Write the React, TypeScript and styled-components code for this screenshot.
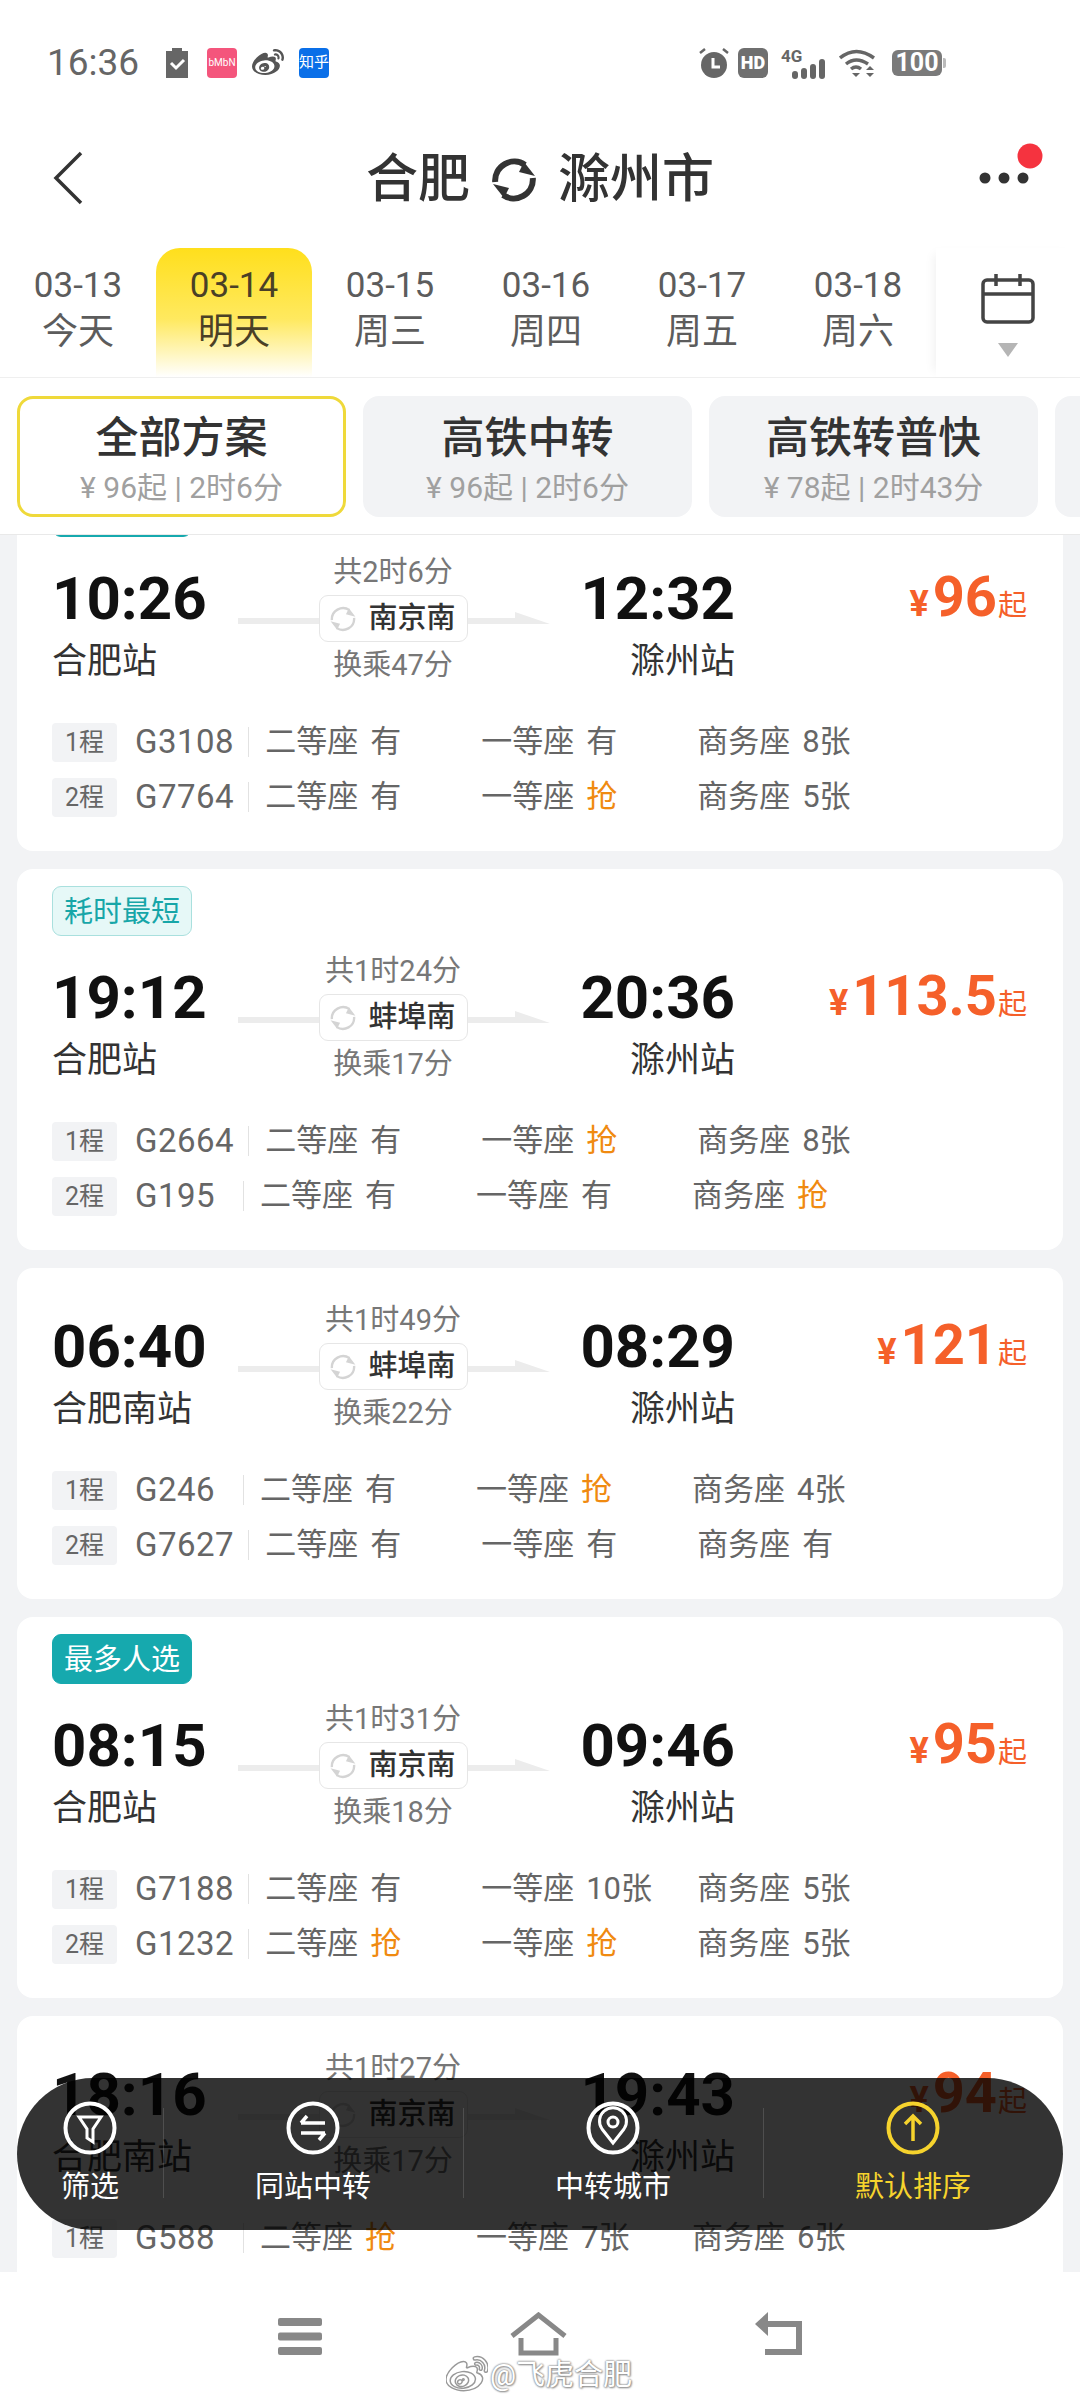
import type { ReactNode } from "react";
import styled, { createGlobalStyle } from "styled-components";
import { FaWeibo } from "react-icons/fa";

const GlobalStyle = createGlobalStyle`
  html, body {
    margin: 0;
    padding: 0;
    background: #fff;
  }
  * {
    box-sizing: border-box;
  }
`;

const Page = styled.div`
  position: relative;
  display: flex;
  flex-direction: column;
  width: 1080px;
  height: 2400px;
  overflow: hidden;
  background: #f2f3f5;
  font-family: Roboto, "Noto Sans CJK SC", sans-serif;
  color: #333;
`;

const TopArea = styled.div`
  flex: none;
  background: #fff;
  border-bottom: 1px solid #e9e9e9;
`;

/* status bar */
const StatusBar = styled.div`
  display: flex;
  align-items: center;
  justify-content: space-between;
  height: 125px;
  padding: 0 135px 0 47px;
`;

const StatusGroup = styled.div<{ $gap: number }>`
  display: flex;
  align-items: center;
  gap: ${(p) => p.$gap}px;
`;

const StatusTime = styled.span`
  width: 100px;
  margin-right: 4px;
  font-size: 37px;
  line-height: 40px;
  color: #666;
`;

const StatusIcon = styled.svg<{ $left?: number; $right?: number }>`
  flex: none;
  margin-left: ${(p) => p.$left ?? 0}px;
  margin-right: ${(p) => p.$right ?? 0}px;
`;

const AppTile = styled.span<{ $bg: string; $size: number }>`
  display: flex;
  align-items: center;
  justify-content: center;
  width: 30px;
  height: 30px;
  border-radius: 4px;
  background: ${(p) => p.$bg};
  color: #fff;
  font-size: ${(p) => p.$size}px;
  line-height: 1;
  white-space: nowrap;
  overflow: hidden;
`;

const HdBadge = styled.span`
  display: flex;
  align-items: center;
  justify-content: center;
  width: 30px;
  height: 30px;
  border-radius: 6px;
  background: #6f6f6f;
  color: #fff;
  font-size: 18px;
  font-weight: 900;
  line-height: 1;
`;

const BatteryBadge = styled.span`
  position: relative;
  display: flex;
  align-items: center;
  justify-content: center;
  width: 50px;
  height: 26px;
  margin: 0 3px 0 8px;
  border-radius: 6px;
  background: #7a7a7a;
  color: #fff;
  font-size: 25px;
  font-weight: 700;
  line-height: 1;

  &::after {
    content: "";
    position: absolute;
    right: -4px;
    top: 8px;
    width: 3px;
    height: 10px;
    border-radius: 0 2px 2px 0;
    background: #bbb;
  }
`;

/* title bar */
const Header = styled.div`
  position: relative;
  display: flex;
  align-items: center;
  justify-content: center;
  height: 110px;
  margin-bottom: 13px;
`;

const BackButton = styled.svg`
  position: absolute;
  left: 52px;
  top: 26px;
`;

const MoreButton = styled.svg`
  position: absolute;
  right: 37px;
  top: 14px;
`;

const Title = styled.div`
  display: flex;
  align-items: center;
  gap: 22px;
  font-size: 52px;
  font-weight: 500;
  line-height: 60px;
  color: #333;
`;

/* date strip */
const DateStrip = styled.div`
  display: flex;
  height: 130px;
  border-bottom: 1px solid #efefef;
`;

const DateItem = styled.div<{ $active?: boolean }>`
  display: flex;
  flex: none;
  flex-direction: column;
  align-items: center;
  width: 156px;
  padding-top: 18px;
  border-radius: 24px 24px 0 0;
  background: ${(p) =>
    p.$active ? "linear-gradient(180deg, #ffdf1c 0%, #ffe95f 55%, #fff 100%)" : "transparent"};
  color: ${(p) => (p.$active ? "#4a4026" : "#5c5c5c")};
`;

const DateNum = styled.span`
  font-size: 35px;
  line-height: 40px;
`;

const DateDay = styled.span`
  margin-top: 3px;
  font-size: 36px;
  line-height: 46px;
`;

const CalendarButton = styled.div`
  display: flex;
  flex: 1;
  flex-direction: column;
  align-items: center;
  gap: 19px;
  padding-top: 26px;
  box-shadow: -8px 0 10px -6px rgba(0, 0, 0, 0.06);
`;

/* plan tabs */
const PlanRow = styled.div`
  display: flex;
  gap: 17px;
  padding: 18px 0 17px 17px;
  overflow: hidden;
`;

const PlanTab = styled.div<{ $active?: boolean }>`
  display: flex;
  flex: none;
  flex-direction: column;
  align-items: center;
  justify-content: center;
  width: 329px;
  height: 121px;
  padding-top: 3px;
  border-radius: 16px;
  border: 3px solid ${(p) => (p.$active ? "#efd93a" : "#f2f3f5")};
  background: ${(p) => (p.$active ? "#fff" : "#f2f3f5")};
`;

const PlanName = styled.span`
  font-size: 43px;
  font-weight: 500;
  line-height: 52px;
  color: #333;
`;

const PlanMeta = styled.span`
  margin-top: 7px;
  font-size: 30px;
  line-height: 34px;
  color: #a0a0a0;
`;

/* result list */
const ListViewport = styled.div`
  flex: 1;
  min-height: 0;
  overflow: hidden;
`;

const List = styled.div`
  display: flex;
  flex-direction: column;
  gap: 18px;
  margin-top: -65px;
  padding: 0 17px;
`;

const Card = styled.div`
  padding: 17px 35px 32px;
  border-radius: 16px;
  background: #fff;
`;

const Tag = styled.div<{ $solid?: boolean }>`
  display: flex;
  align-items: center;
  justify-content: center;
  width: 140px;
  height: 50px;
  padding-top: 2px;
  border-radius: 9px;
  border: 1px solid ${(p) => (p.$solid ? "#16a9ae" : "#a9e0de")};
  background: ${(p) => (p.$solid ? "#16a9ae" : "#e6f8f7")};
  color: ${(p) => (p.$solid ? "#fff" : "#17a6a8")};
  font-size: 29px;
  line-height: 1;
`;

const Trip = styled.div`
  display: flex;
  margin-top: 16px;
`;

const Stop = styled.div<{ $end?: boolean }>`
  display: flex;
  flex: none;
  flex-direction: column;
  align-items: ${(p) => (p.$end ? "flex-end" : "flex-start")};
  width: ${(p) => (p.$end ? 187 : 186)}px;
  padding-top: 13px;
`;

const TimeText = styled.span`
  font-size: 60px;
  font-weight: 700;
  line-height: 66px;
  color: #111;
`;

const StationName = styled.span`
  margin-top: 8px;
  font-size: 35px;
  line-height: 44px;
  color: #333;
`;

const Transfer = styled.div`
  position: relative;
  display: flex;
  flex: none;
  flex-direction: column;
  align-items: center;
  gap: 4px;
  width: 310px;
`;

const TransferNote = styled.span`
  font-size: 29px;
  line-height: 38px;
  color: #777;
`;

const TrackLine = styled.svg`
  position: absolute;
  left: 0;
  top: 38px;
`;

const Via = styled.div`
  position: relative;
  display: flex;
  align-items: center;
  justify-content: center;
  gap: 12px;
  width: 149px;
  height: 47px;
  border: 1px solid #e6e6e6;
  border-radius: 9px;
  background: #fff;
  font-size: 29px;
  font-weight: 500;
  line-height: 1;
  color: #333;
`;

const Price = styled.div`
  display: flex;
  flex: 1;
  align-items: baseline;
  justify-content: flex-end;
  padding-top: 14px;
  padding-right: 1px;
  line-height: 60px;
  color: #f5602a;
  font-weight: 700;
`;

const PriceSign = styled.span`
  margin-right: 4px;
  font-size: 36px;
`;

const PriceValue = styled.span`
  font-size: 56px;
`;

const PriceUnit = styled.span`
  margin-left: 1px;
  font-size: 29px;
  font-weight: 400;
`;

const Legs = styled.div`
  display: flex;
  flex-direction: column;
  gap: 11px;
  margin-top: 36px;
`;

const Leg = styled.div`
  display: flex;
  align-items: center;
  height: 44px;
  color: #666;
`;

const LegBadge = styled.span`
  display: flex;
  flex: none;
  align-items: center;
  justify-content: center;
  width: 65px;
  height: 39px;
  border-radius: 4px;
  background: #f2f3f5;
  font-size: 25px;
  line-height: 1;
`;

const TrainNo = styled.span`
  min-width: 94px;
  margin-left: 18px;
  font-size: 33px;
  line-height: 44px;
  letter-spacing: 0.5px;
`;

const LegDivider = styled.span`
  flex: none;
  width: 1px;
  height: 30px;
  margin: 0 16px 0 14px;
  background: #e2e2e2;
`;

const Seat = styled.span`
  flex: none;
  width: 216px;
  font-size: 31px;
  line-height: 44px;
  white-space: nowrap;
`;

const SeatState = styled.span<{ $rush?: boolean }>`
  margin-left: 12px;
  color: ${(p) => (p.$rush ? "#f08a10" : "#666")};
`;

/* floating toolbar */
const ToolBar = styled.div`
  position: absolute;
  left: 17px;
  top: 2078px;
  display: flex;
  width: 1046px;
  height: 152px;
  border-radius: 76px;
  background: rgba(0, 0, 0, 0.8);
`;

const ToolItem = styled.div<{ $wide?: boolean; $active?: boolean }>`
  position: relative;
  display: flex;
  flex: none;
  flex-direction: column;
  align-items: center;
  width: ${(p) => (p.$wide ? 300 : 146)}px;
  padding-top: 23px;
  color: ${(p) => (p.$active ? "#f6d32d" : "#fff")};

  &:not(:first-child)::before {
    content: "";
    position: absolute;
    left: 0;
    top: 30px;
    width: 1px;
    height: 90px;
    background: rgba(255, 255, 255, 0.14);
  }
`;

const ToolLabel = styled.span`
  margin-top: 12px;
  font-size: 29px;
  line-height: 40px;
`;

/* system navigation */
const SystemNav = styled.div`
  position: relative;
  display: flex;
  flex: none;
  justify-content: center;
  align-items: flex-start;
  gap: 188px;
  height: 128px;
  padding-top: 40px;
  background: #fff;
`;

const MenuIcon = styled.svg`
  margin-top: 6px;
`;

const Watermark = styled.div`
  position: absolute;
  left: 446px;
  top: 82px;
  display: flex;
  align-items: center;
  gap: 2px;
  font-size: 29px;
  line-height: 40px;
  color: #fff;
  text-shadow: 0 0 2px #888, 0 0 2px #888, 1px 1px 2px #999;
`;

const SyncIcon = ({ size, color, width }: { size: number; color: string; width: number }) => (
  <svg width={size} height={size} viewBox="0 0 44 44" fill="none">
    <path d="M3.2 24 A19 19 0 0 1 33 7" stroke={color} strokeWidth={width} />
    <path d="M40.8 20 A19 19 0 0 1 11 37" stroke={color} strokeWidth={width} />
    <path d="M32 4 L43 18 L27 14 Z" fill={color} />
    <path d="M12 40 L1 26 L17 30 Z" fill={color} />
  </svg>
);

const ToolCircle = ({ color, children }: { color: string; children: ReactNode }) => (
  <svg width="54" height="54" viewBox="0 0 54 54" fill="none" stroke={color} strokeWidth="3.5">
    <circle cx="27" cy="27" r="24.5" strokeWidth="4" />
    {children}
  </svg>
);

type SeatInfo = { name: string; state: string; rush?: boolean };
type LegInfo = { no: string; seats: SeatInfo[] };
type TripInfo = {
  tag?: string;
  solid?: boolean;
  dep: string;
  arr: string;
  from: string;
  to: string;
  total: string;
  via: string;
  wait: string;
  price: string;
  legs: LegInfo[];
};

const seats = (a: string, b: string, c: string): SeatInfo[] =>
  [
    ["二等座", a],
    ["一等座", b],
    ["商务座", c],
  ].map(([name, state]) => ({ name, state, rush: state === "抢" }));

const trips: TripInfo[] = [
  {
    tag: "最多人选",
    solid: true,
    dep: "10:26",
    arr: "12:32",
    from: "合肥站",
    to: "滁州站",
    total: "共2时6分",
    via: "南京南",
    wait: "换乘47分",
    price: "96",
    legs: [
      { no: "G3108", seats: seats("有", "有", "8张") },
      { no: "G7764", seats: seats("有", "抢", "5张") },
    ],
  },
  {
    tag: "耗时最短",
    dep: "19:12",
    arr: "20:36",
    from: "合肥站",
    to: "滁州站",
    total: "共1时24分",
    via: "蚌埠南",
    wait: "换乘17分",
    price: "113.5",
    legs: [
      { no: "G2664", seats: seats("有", "抢", "8张") },
      { no: "G195", seats: seats("有", "有", "抢") },
    ],
  },
  {
    dep: "06:40",
    arr: "08:29",
    from: "合肥南站",
    to: "滁州站",
    total: "共1时49分",
    via: "蚌埠南",
    wait: "换乘22分",
    price: "121",
    legs: [
      { no: "G246", seats: seats("有", "抢", "4张") },
      { no: "G7627", seats: seats("有", "有", "有") },
    ],
  },
  {
    tag: "最多人选",
    solid: true,
    dep: "08:15",
    arr: "09:46",
    from: "合肥站",
    to: "滁州站",
    total: "共1时31分",
    via: "南京南",
    wait: "换乘18分",
    price: "95",
    legs: [
      { no: "G7188", seats: seats("有", "10张", "5张") },
      { no: "G1232", seats: seats("抢", "抢", "5张") },
    ],
  },
  {
    dep: "18:16",
    arr: "19:43",
    from: "合肥南站",
    to: "滁州站",
    total: "共1时27分",
    via: "南京南",
    wait: "换乘17分",
    price: "94",
    legs: [{ no: "G588", seats: seats("抢", "7张", "6张") }],
  },
];

const dates = [
  ["03-13", "今天"],
  ["03-14", "明天"],
  ["03-15", "周三"],
  ["03-16", "周四"],
  ["03-17", "周五"],
  ["03-18", "周六"],
];

const plans = [
  ["全部方案", "¥ 96起 | 2时6分"],
  ["高铁中转", "¥ 96起 | 2时6分"],
  ["高铁转普快", "¥ 78起 | 2时43分"],
  ["", ""],
];

const TripCard = ({ trip }: { trip: TripInfo }) => (
  <Card>
    {trip.tag && <Tag $solid={trip.solid}>{trip.tag}</Tag>}
    <Trip>
      <Stop>
        <TimeText>{trip.dep}</TimeText>
        <StationName>{trip.from}</StationName>
      </Stop>
      <Transfer>
        <TransferNote>{trip.total}</TransferNote>
        <TrackLine width="312" height="40" viewBox="0 0 312 40">
          <path d="M0 27 H277 V21 L312 33 H0 Z" fill="#ececec" />
        </TrackLine>
        <Via>
          <SyncIcon size={26} color="#d4d4d4" width={4} />
          {trip.via}
        </Via>
        <TransferNote>{trip.wait}</TransferNote>
      </Transfer>
      <Stop $end>
        <TimeText>{trip.arr}</TimeText>
        <StationName>{trip.to}</StationName>
      </Stop>
      <Price>
        <PriceSign>¥</PriceSign>
        <PriceValue>{trip.price}</PriceValue>
        <PriceUnit>起</PriceUnit>
      </Price>
    </Trip>
    <Legs>
      {trip.legs.map((leg, i) => (
        <Leg key={leg.no}>
          <LegBadge>{i + 1}程</LegBadge>
          <TrainNo>{leg.no}</TrainNo>
          <LegDivider />
          {leg.seats.map((seat) => (
            <Seat key={seat.name}>
              {seat.name}
              <SeatState $rush={seat.rush}>{seat.state}</SeatState>
            </Seat>
          ))}
        </Leg>
      ))}
    </Legs>
  </Card>
);

export default function App() {
  return (
    <Page>
      <GlobalStyle />
      <TopArea>
        <StatusBar>
          <StatusGroup $gap={15}>
            <StatusTime>16:36</StatusTime>
            <StatusIcon $right={4} width="22" height="30" viewBox="0 0 22 30">
              <path d="M0 3 H6 V0 H16 V3 H22 V30 H0 Z" fill="#666" />
              <path d="M5 15 L10 20 L18 12" fill="none" stroke="#fff" strokeWidth="3" />
            </StatusIcon>
            <AppTile $bg="#f4557c" $size={10}>
              bMbN
            </AppTile>
            <FaWeibo size={32} color="#555" />
            <AppTile $bg="#0a6fe8" $size={15}>
              知乎
            </AppTile>
          </StatusGroup>
          <StatusGroup $gap={9}>
            <svg width="30" height="30" viewBox="0 0 30 30">
              <circle cx="15" cy="17" r="13" fill="#666" />
              <path d="M14 10 V19 H21" fill="none" stroke="#fff" strokeWidth="3" />
              <path d="M1 5 L6 1 M29 5 L24 1" stroke="#666" strokeWidth="2.5" />
            </svg>
            <HdBadge>HD</HdBadge>
            <StatusIcon $left={3} width="50" height="32" viewBox="0 0 50 32">
              <text x="1" y="15" fontSize="17" fontWeight="700" fontFamily="Roboto" fill="#666">
                4G
              </text>
              <g fill="#666">
                <rect x="12" y="24" width="6" height="8" rx="3" />
                <rect x="21" y="21" width="6" height="11" rx="3" />
                <rect x="30" y="17" width="6" height="15" rx="3" />
                <rect x="39" y="12" width="6" height="20" rx="3" />
              </g>
            </StatusIcon>
            <svg width="36" height="28" viewBox="0 0 36 28">
              <path
                d="M1 9 Q17 -4 35 9 M7 15 Q17 7 29 15 M12 20 Q17 16 22 20"
                fill="none"
                stroke="#666"
                strokeWidth="3.5"
              />
              <path d="M13 24 H21 L17 28 Z M27 21 L31 17 L35 21 Z M27 24 H35 L31 28 Z" fill="#666" />
            </svg>
            <BatteryBadge>100</BatteryBadge>
          </StatusGroup>
        </StatusBar>
        <Header>
          <BackButton width="32" height="54" viewBox="0 0 32 54" fill="none">
            <path d="M29 2 L4 27 L29 52" stroke="#333" strokeWidth="3.5" />
          </BackButton>
          <Title>
            合肥
            <SyncIcon size={44} color="#333" width={6} />
            滁州市
          </Title>
          <MoreButton width="64" height="60" viewBox="0 0 64 60">
            <g fill="#333">
              <circle cx="6" cy="39" r="5.5" />
              <circle cx="25" cy="39" r="5.5" />
              <circle cx="44" cy="39" r="5.5" />
            </g>
            <circle cx="51" cy="17" r="12.5" fill="#f5333f" />
          </MoreButton>
        </Header>
        <DateStrip>
          {dates.map(([num, day], i) => (
            <DateItem key={num} $active={i === 1}>
              <DateNum>{num}</DateNum>
              <DateDay>{day}</DateDay>
            </DateItem>
          ))}
          <CalendarButton>
            <svg width="54" height="50" viewBox="0 0 54 50" fill="none" stroke="#444" strokeWidth="3.5">
              <rect x="2" y="6" width="50" height="42" rx="4" />
              <path d="M2 20 H52 M15 0 V12 M39 0 V12" />
            </svg>
            <svg width="20" height="14" viewBox="0 0 20 14">
              <path d="M0 0 H20 L10 14 Z" fill="#b5b5b5" />
            </svg>
          </CalendarButton>
        </DateStrip>
        <PlanRow>
          {plans.map(([name, meta], i) => (
            <PlanTab key={i} $active={i === 0}>
              <PlanName>{name}</PlanName>
              <PlanMeta>{meta}</PlanMeta>
            </PlanTab>
          ))}
        </PlanRow>
      </TopArea>
      <ListViewport>
        <List>
          {trips.map((trip) => (
            <TripCard key={trip.dep} trip={trip} />
          ))}
        </List>
      </ListViewport>
      <SystemNav>
        <MenuIcon width="44" height="37" viewBox="0 0 44 37">
          <g fill="#888">
            <rect x="0" y="0" width="44" height="8" rx="2" />
            <rect x="0" y="14.5" width="44" height="8" rx="2" />
            <rect x="0" y="29" width="44" height="8" rx="2" />
          </g>
        </MenuIcon>
        <svg width="57" height="44" viewBox="0 0 57 44" fill="none" stroke="#888" strokeWidth="5">
          <path d="M2 24 L28.5 3 L55 24" />
          <path d="M11 26 V41 H46 V26" />
        </svg>
        <svg width="47" height="43" viewBox="0 0 47 43" fill="none" stroke="#888" strokeWidth="6">
          <path d="M12 12 H44 V40 H10" />
          <path d="M0 12 L13 0 V24 Z" fill="#888" stroke="none" />
        </svg>
        <Watermark>
          <FaWeibo size={42} color="#fff" stroke="#999" strokeWidth={18} />
          @飞虎合肥
        </Watermark>
      </SystemNav>
      <ToolBar>
        <ToolItem>
          <ToolCircle color="#fff">
            <path d="M16 16 H38 L30 28 V41 L24 37 V28 Z" strokeWidth="3" />
          </ToolCircle>
          <ToolLabel>筛选</ToolLabel>
        </ToolItem>
        <ToolItem $wide>
          <ToolCircle color="#fff">
            <path d="M15 22 H39 M21 15 L15 22 M39 32 H15 M33 39 L39 32" />
          </ToolCircle>
          <ToolLabel>同站中转</ToolLabel>
        </ToolItem>
        <ToolItem $wide>
          <ToolCircle color="#fff">
            <path d="M27 42 L16 28 A13.5 13.5 0 1 1 38 28 Z" strokeWidth="3" />
            <circle cx="27" cy="21" r="5" strokeWidth="3" />
          </ToolCircle>
          <ToolLabel>中转城市</ToolLabel>
        </ToolItem>
        <ToolItem $wide $active>
          <ToolCircle color="#f6d32d">
            <path d="M27 40 V15 M19 23 L27 15 L35 23" />
          </ToolCircle>
          <ToolLabel>默认排序</ToolLabel>
        </ToolItem>
      </ToolBar>
    </Page>
  );
}
